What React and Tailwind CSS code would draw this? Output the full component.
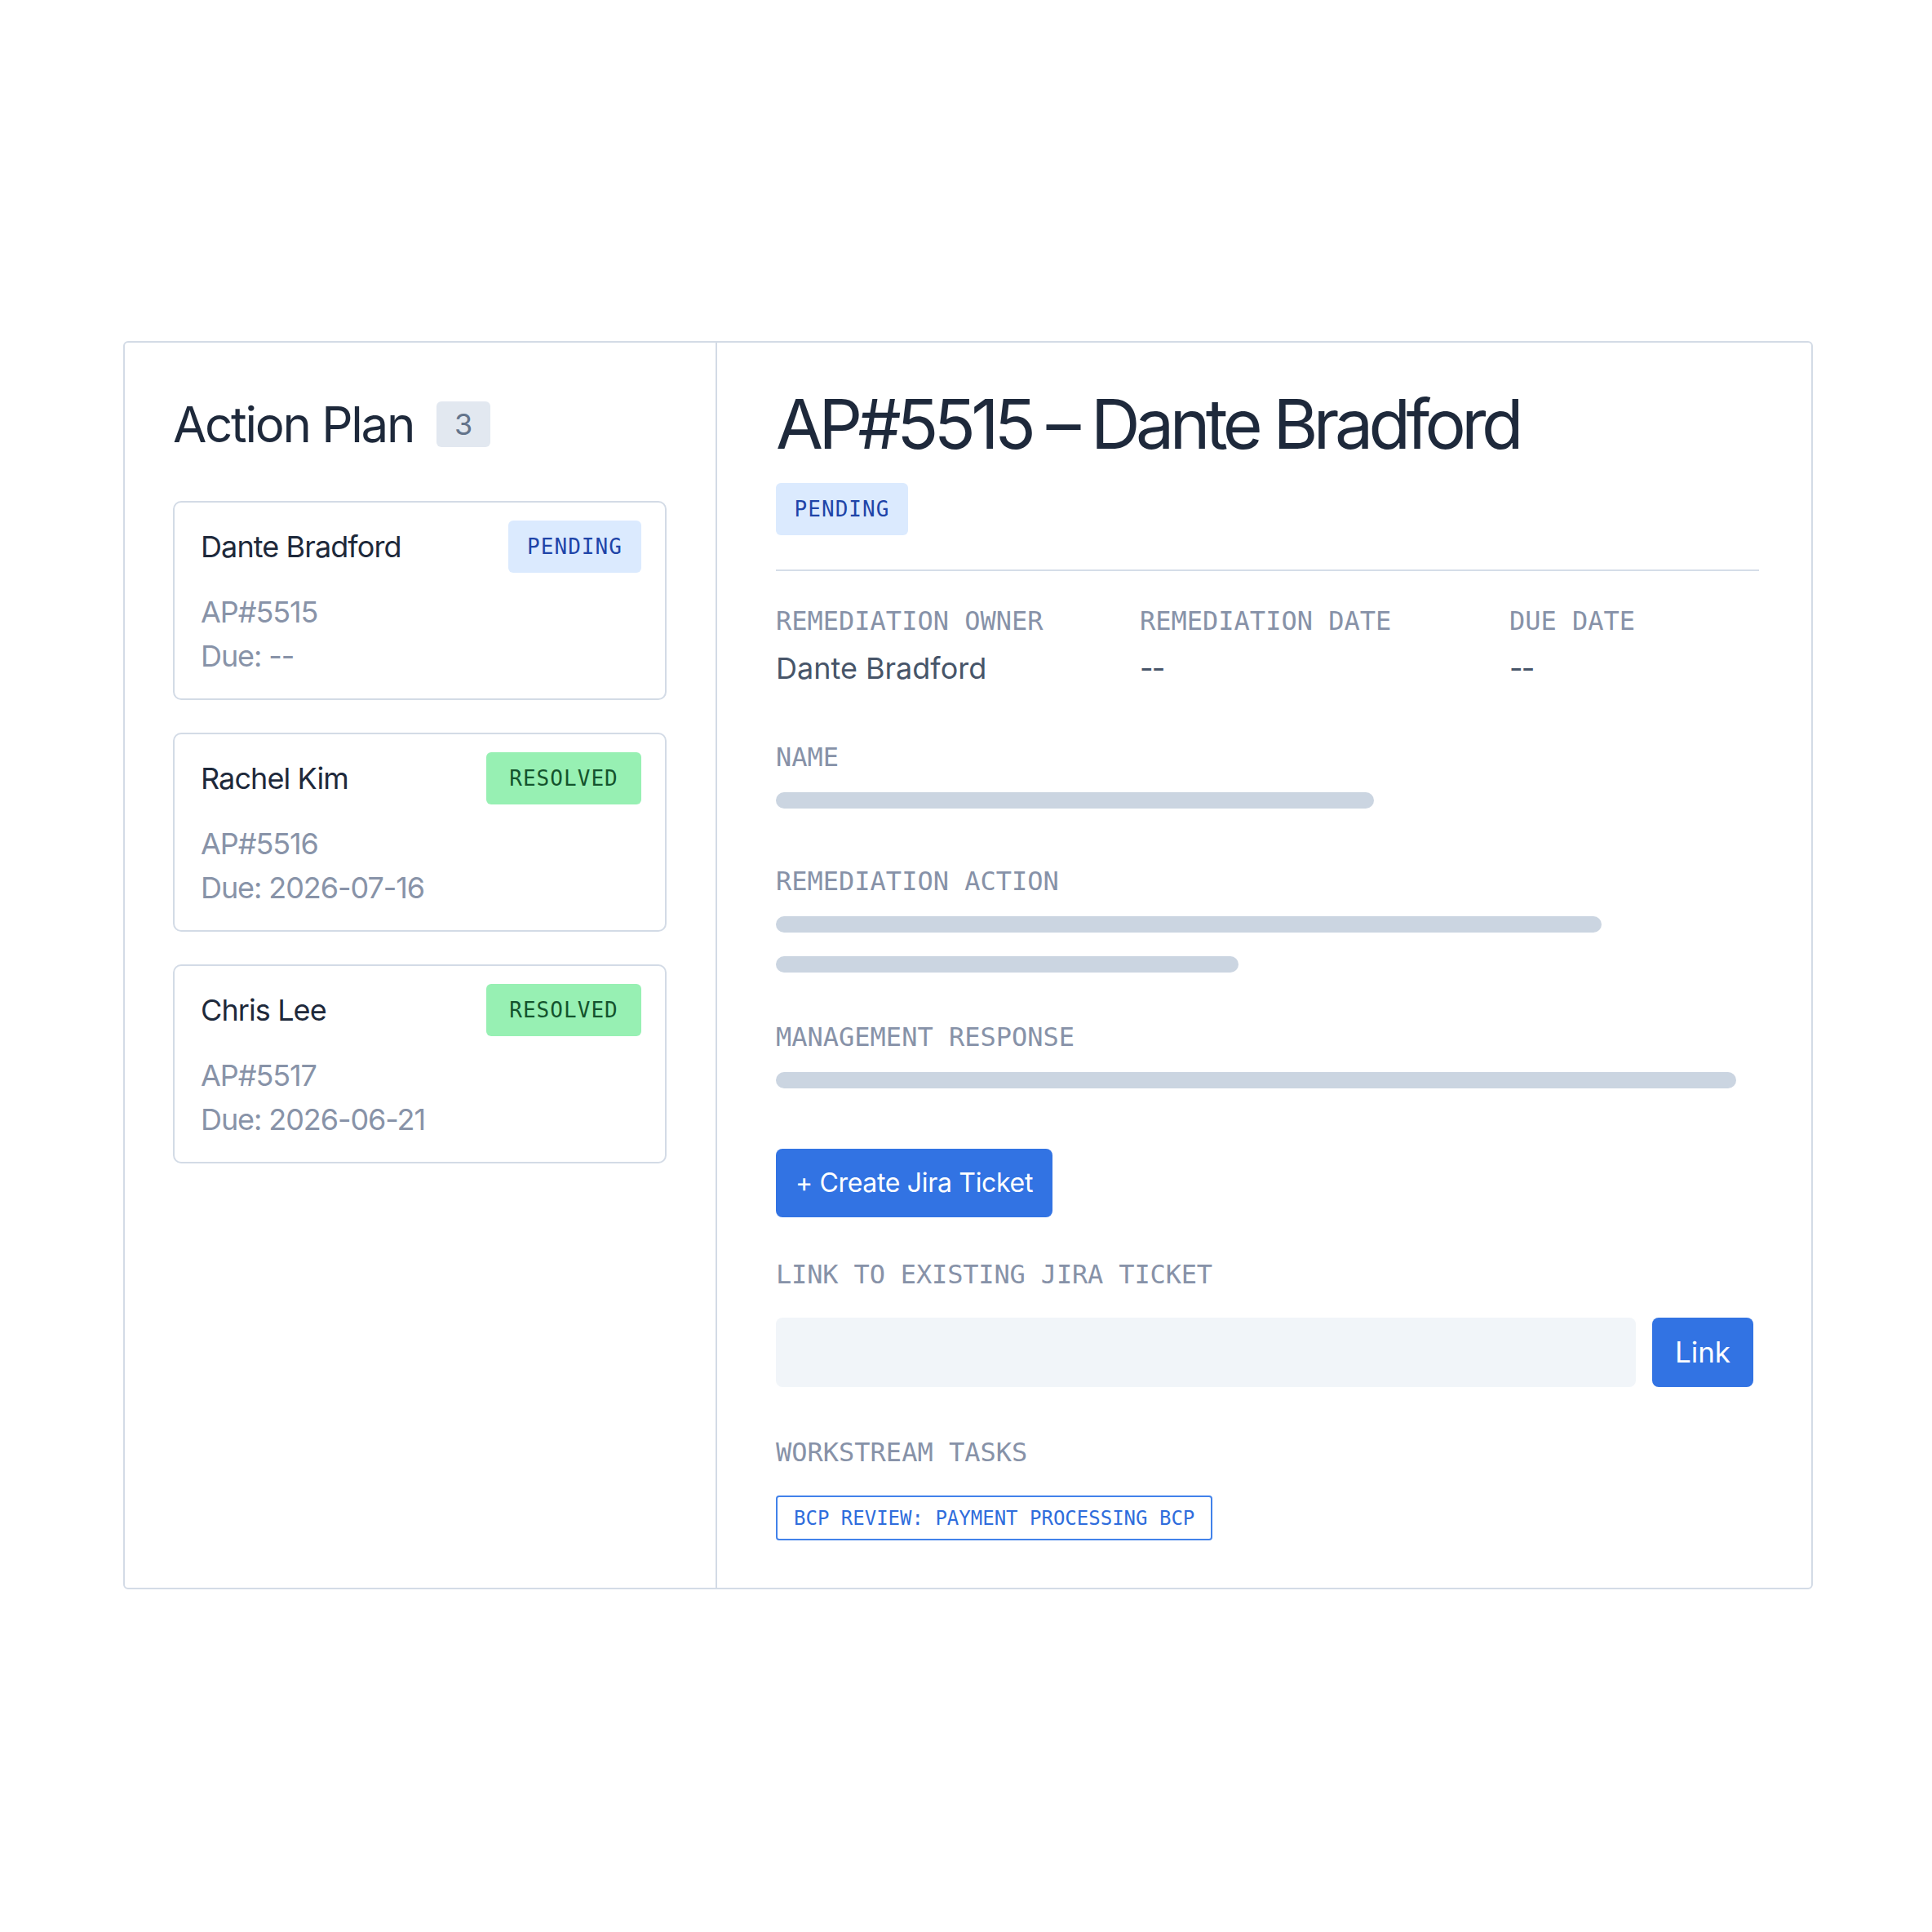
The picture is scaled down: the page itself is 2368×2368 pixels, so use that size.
export default function App() {
  const cards = [
    { name: "Dante Bradford", id: "AP#5515", due: "Due: --", status: "PENDING" },
    { name: "Rachel Kim", id: "AP#5516", due: "Due: 2026-07-16", status: "RESOLVED" },
    { name: "Chris Lee", id: "AP#5517", due: "Due: 2026-06-21", status: "RESOLVED" },
  ];

  const Label = ({ children, className = "" }) => (
    <div className={"font-['DejaVu_Sans_Mono',monospace] text-[32px] leading-[32px] text-[#8792a8] whitespace-nowrap " + className}>
      {children}
    </div>
  );

  return (
    <div className="w-[2368px] min-h-[2368px] bg-white pt-[418px] pl-[151px] font-['Inter',sans-serif]">
      <div className="flex w-[2071px] h-[1530px] rounded-[6px] border-2 border-[#d3dbe6]">
        {/* Left panel */}
        <div className="w-[726px] shrink-0 border-r-2 border-[#d3dbe6] pt-[72px] pl-[59px] pr-[60px]">
          <div className="flex h-[56px] items-center gap-[28px]">
            <h2 className="text-[60px] leading-none text-[#1e293b] tracking-[-0.038em]">Action Plan</h2>
            <span className="flex h-[56px] w-[66px] items-center justify-center rounded-[6px] bg-[#e2e8f0] text-[36px] text-[#64748b]">
              3
            </span>
          </div>
          <div className="mt-[66px] flex flex-col gap-[40px]">
            {cards.map((c) => (
              <div key={c.id} className="h-[244px] rounded-[10px] border-2 border-[#d3dbe6] pt-[22px] pl-[32px] pr-[29px]">
                <div className="flex h-[64px] items-center justify-between">
                  <span className="text-[36px] leading-none text-[#1e293b] tracking-[-0.025em]">{c.name}</span>
                  {c.status === "PENDING" ? (
                    <span className="flex h-[64px] w-[163px] items-center justify-center rounded-[6px] bg-[#dbeafe] font-['DejaVu_Sans_Mono',monospace] text-[26px] tracking-[0.04em] text-[#1e44a8]">
                      PENDING
                    </span>
                  ) : (
                    <span className="flex h-[64px] w-[190px] items-center justify-center rounded-[6px] bg-[#97f0b3] font-['DejaVu_Sans_Mono',monospace] text-[26px] tracking-[0.04em] text-[#14532d]">
                      RESOLVED
                    </span>
                  )}
                </div>
                <div className="mt-[21px] text-[36px] leading-[54px] text-[#8893a8] tracking-[-0.03em]">
                  <div>{c.id}</div>
                  <div>{c.due}</div>
                </div>
              </div>
            ))}
          </div>
        </div>

        {/* Right panel */}
        <div className="flex-1 pt-[58px] pl-[72px] pr-[64px]">
          <h1 className="text-[84px] leading-none text-[#1e293b] tracking-[-0.066em] whitespace-nowrap">
            AP#5515 – Dante Bradford
          </h1>
          <div className="mt-[30px] flex h-[64px] w-[162px] items-center justify-center rounded-[6px] bg-[#dbeafe] font-['DejaVu_Sans_Mono',monospace] text-[26px] tracking-[0.04em] text-[#1e44a8]">
            PENDING
          </div>
          <div className="mt-[42px] h-[2px] bg-[#d5dde8]" />

          <div className="mt-[45px] flex">
            <div className="w-[446px] shrink-0">
              <Label>REMEDIATION OWNER</Label>
              <div className="mt-[15px] text-[36px] leading-[54px] text-[#475569]">Dante Bradford</div>
            </div>
            <div className="w-[453px] shrink-0">
              <Label>REMEDIATION DATE</Label>
              <div className="mt-[15px] text-[36px] leading-[54px] text-[#475569] tracking-[-0.05em]">--</div>
            </div>
            <div className="flex-1">
              <Label>DUE DATE</Label>
              <div className="mt-[15px] text-[36px] leading-[54px] text-[#475569] tracking-[-0.05em]">--</div>
            </div>
          </div>

          <Label className="mt-[66px]">NAME</Label>
          <div className="mt-[27px] h-[20px] w-[733px] rounded-full bg-[#cbd5e1]" />

          <Label className="mt-[73px]">REMEDIATION ACTION</Label>
          <div className="mt-[27px] h-[20px] w-[1012px] rounded-full bg-[#cbd5e1]" />
          <div className="mt-[29px] h-[20px] w-[567px] rounded-full bg-[#cbd5e1]" />

          <Label className="mt-[63px]">MANAGEMENT RESPONSE</Label>
          <div className="mt-[27px] h-[20px] w-[1177px] rounded-full bg-[#cbd5e1]" />

          <button className="mt-[74px] flex h-[84px] w-[339px] items-center justify-center rounded-[8px] bg-[#3273e3] text-[32px] text-white tracking-[-0.01em]">
            + Create Jira Ticket
          </button>

          <Label className="mt-[54px] tracking-[-0.005em]">LINK TO EXISTING JIRA TICKET</Label>
          <div className="mt-[37px] flex h-[85px] w-[1198px] gap-[20px]">
            <div className="flex-1 rounded-[8px] bg-[#f1f5f9]" />
            <button className="flex w-[124px] items-center justify-center rounded-[8px] bg-[#3273e3] text-[35px] text-white">
              Link
            </button>
          </div>

          <Label className="mt-[64px]">WORKSTREAM TASKS</Label>
          <div className="mt-[37px] inline-flex h-[55px] items-center rounded-[4px] border-2 border-[#4282ea] px-[20px] font-['DejaVu_Sans_Mono',monospace] text-[24px] text-[#2f6ddc] whitespace-nowrap">
            BCP REVIEW: PAYMENT PROCESSING BCP
          </div>
        </div>
      </div>
    </div>
  );
}
